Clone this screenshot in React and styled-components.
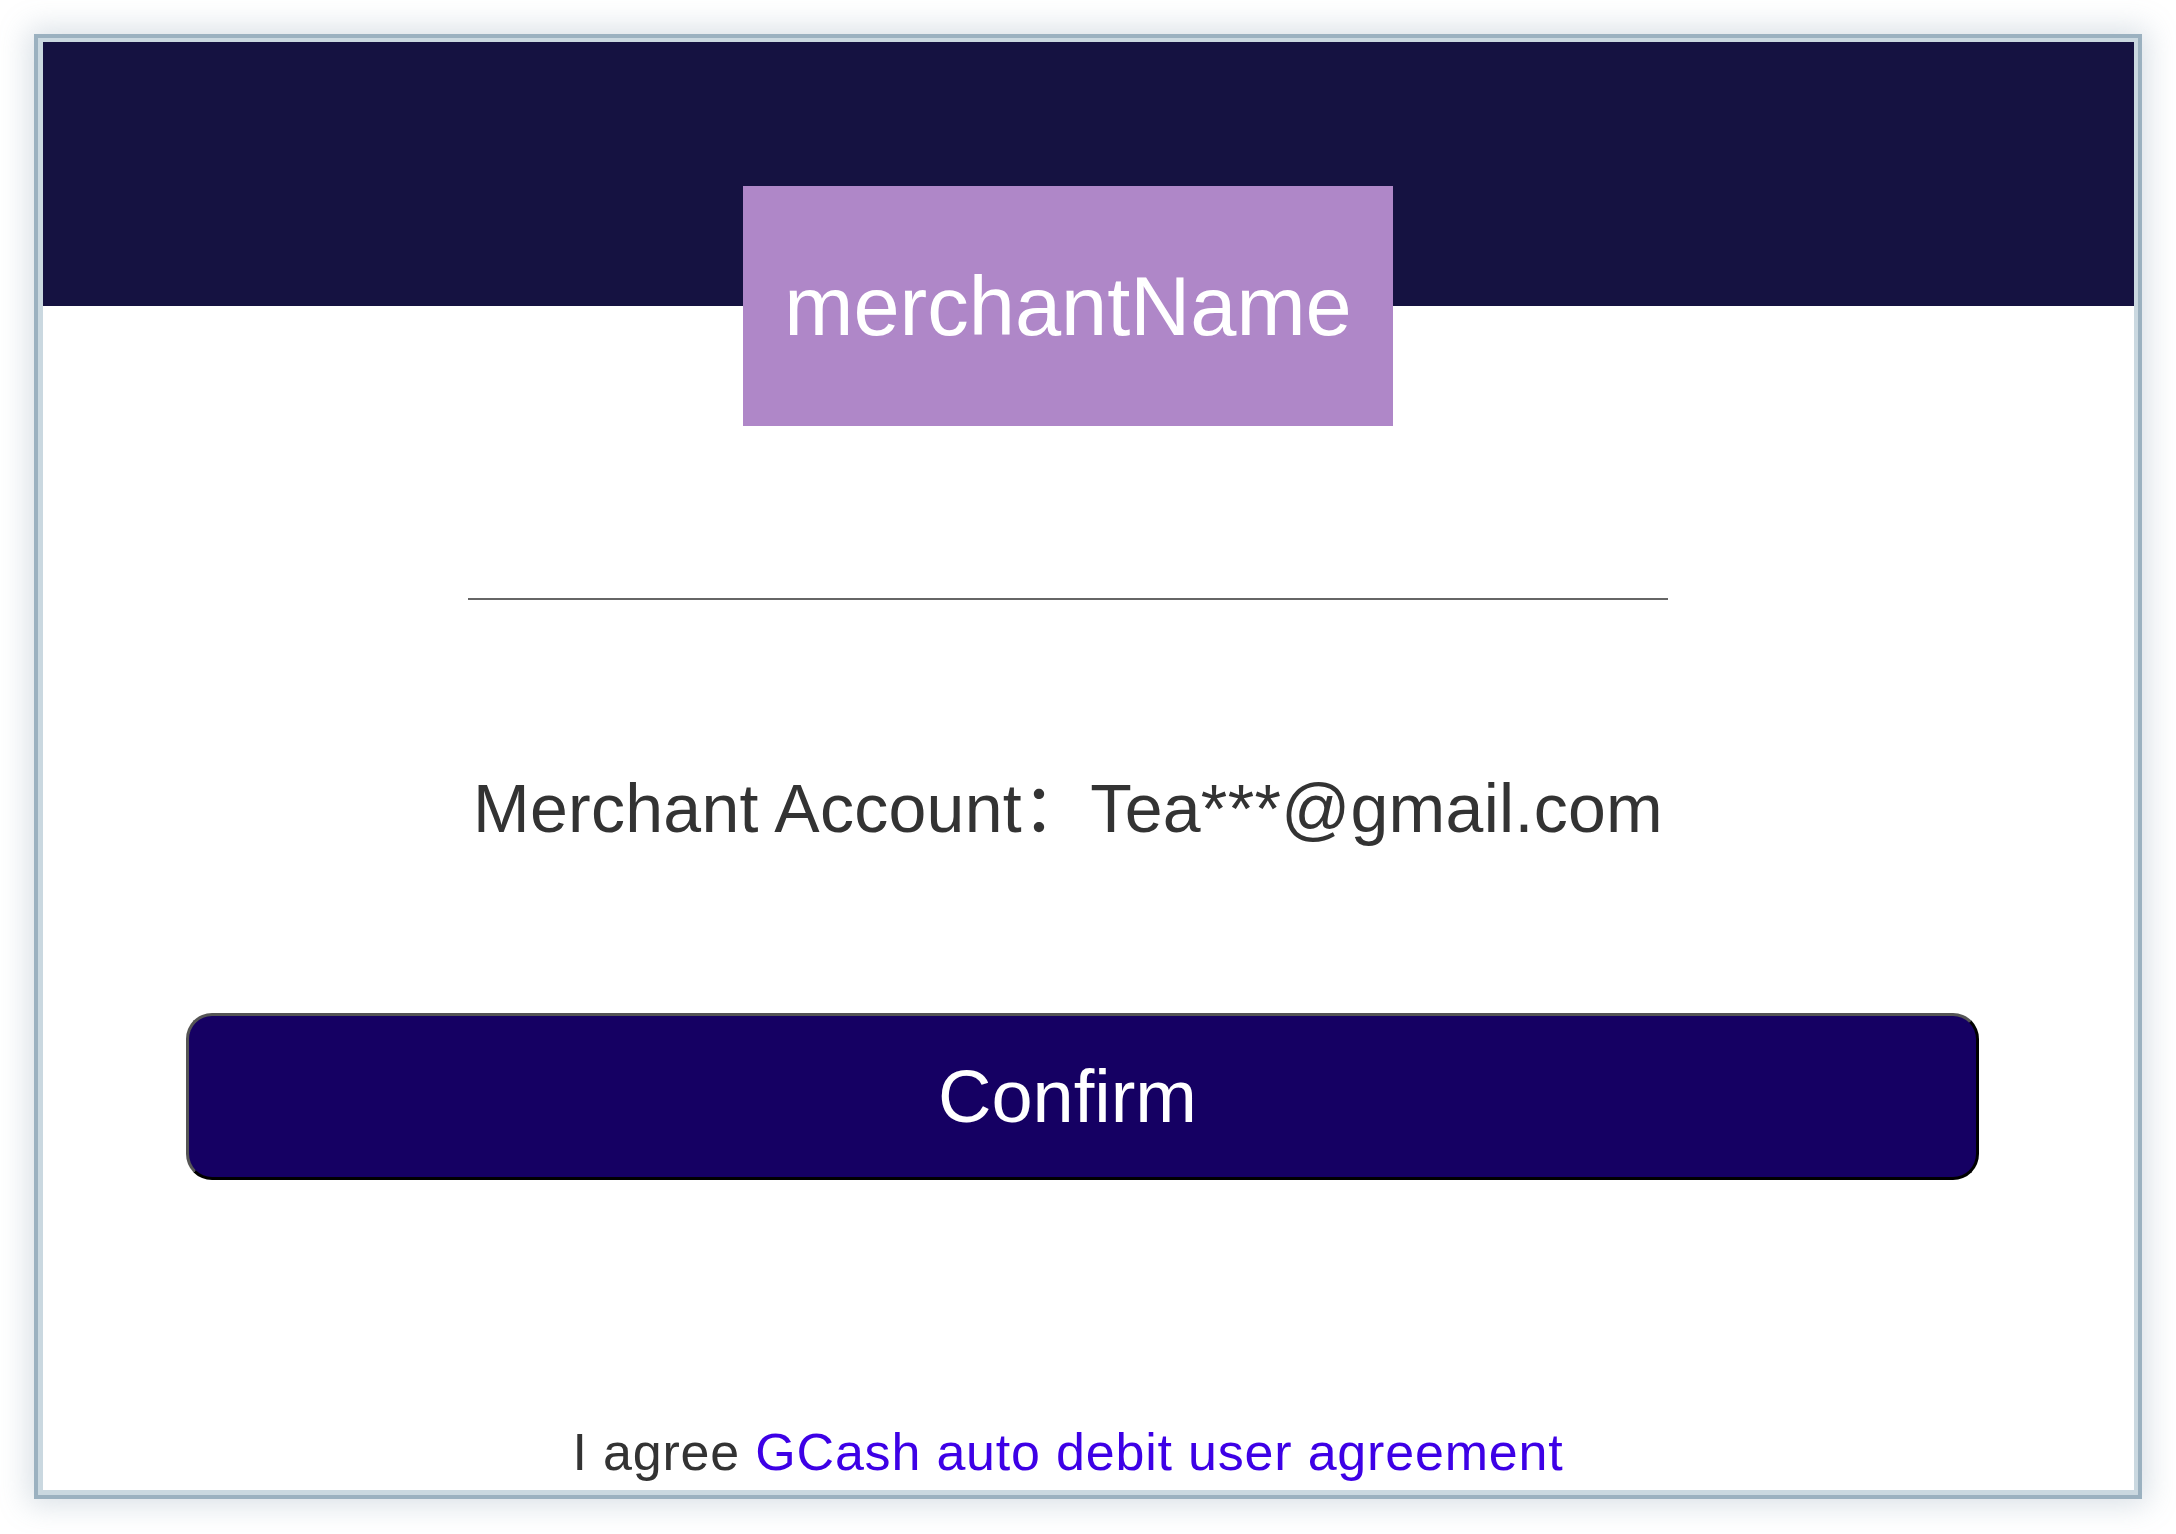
import React from 'react'
import styled, { createGlobalStyle } from "styled-components"

const GlobalStyle = createGlobalStyle`
  html, body {
    margin: 0;
    padding: 0;
    background: #ffffff;
  }
  body {
    padding: 34px;
    font-family: "Liberation Sans", Arial, "Noto Sans CJK SC", sans-serif;
  }
`

const Frame = styled.div`
  width: 2100px;
  border: 4px solid #9bb1c0;
  box-shadow: 0 0 28px 6px rgba(120, 145, 165, 0.28);
`

const Inner = styled.div`
  border: 5px solid #cad8e0;
  border-right-width: 4px;
  border-top-width: 4px;
  background: #ffffff;
  height: 1448px;
  overflow: hidden;
`

const Header = styled.div`
  height: 264px;
  background-color: #151241;
`

const Body = styled.div`
  display: flex;
  flex-direction: column;
  align-items: center;
  padding-right: 41px;
`

const Logo = styled.div`
  margin-top: -120px;
  width: 650px;
  height: 240px;
  background-color: #af87c8;
  color: #ffffff;
  font-size: 83px;
  line-height: 1;
  display: flex;
  align-items: center;
  justify-content: center;
`

const Divider = styled.div`
  margin-top: 172px;
  width: 1200px;
  height: 2px;
  background-color: #666666;
`

const Account = styled.p`
  margin: 168px 0 0;
  font-size: 68px;
  line-height: 1.2;
  color: #333333;
  letter-spacing: 0.3px;
  white-space: nowrap;
`

const ConfirmButton = styled.button`
  align-self: flex-start;
  margin: 163px 0 0 143px;
  width: 1793px;
  height: 167px;
  padding: 0 30px 0 0;
  border: 3px solid;
  border-color: #555555 #000000 #000000 #555555;
  border-radius: 26px;
  background-color: #150063;
  color: #ffffff;
  font-family: inherit;
  font-size: 74px;
  cursor: pointer;
`

const Agreement = styled.p`
  margin: 241px 0 0;
  font-size: 52px;
  line-height: 1.2;
  letter-spacing: 0.8px;
  color: #333333;
  white-space: nowrap;
`

const Link = styled.a`
  color: #3d00e6;
  text-decoration: none;
  cursor: pointer;
`

const App = () => {
  return (
    <>
      <GlobalStyle />
      <Frame>
        <Inner>
          <Header />
          <Body>
            <Logo>merchantName</Logo>
            <Divider />
            <Account>Merchant Account：Tea***@gmail.com</Account>
            <ConfirmButton>Confirm</ConfirmButton>
            <Agreement>
              I agree <Link>GCash auto debit user agreement</Link>
            </Agreement>
          </Body>
        </Inner>
      </Frame>
    </>
  )
}

export default App
